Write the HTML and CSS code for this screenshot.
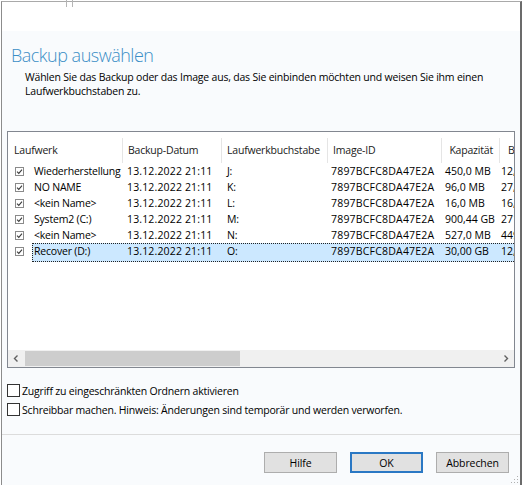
FILE: index.html
```html
<!DOCTYPE html>
<html lang="de">
<head>
<meta charset="utf-8">
<title>Backup auswählen</title>
<link rel="stylesheet" href="styles.css">
</head>
<body>
<div class="dialog">
  <div class="behind"></div>
  <div class="head">
    <h1 class="title">Backup auswählen</h1>
    <p class="subtitle">Wählen Sie das Backup oder das Image aus, das Sie einbinden möchten und weisen Sie ihm einen<br>Laufwerkbuchstaben zu.</p>
  </div>

  <div class="list">
    <div class="list-head">
      <div class="th c1">Laufwerk</div>
      <div class="th c2">Backup-Datum</div>
      <div class="th c3">Laufwerkbuchstabe</div>
      <div class="th c4">Image-ID</div>
      <div class="th c5">Kapazität</div>
      <div class="th c6">Belegt</div>
    </div>
    <div class="list-body">
      <div class="row">
        <div class="td c1"><svg class="chk" viewBox="0 0 9 9"><rect x="0.5" y="0.5" width="8" height="8"/><path d="M2 4.6 L3.8 6.4 L7 2.6"/></svg><span class="name">Wiederherstellung</span></div>
        <div class="td c2">13.12.2022 21:11</div>
        <div class="td c3">J:</div>
        <div class="td c4">7897BCFC8DA47E2A</div>
        <div class="td c5">450,0 MB</div>
        <div class="td c6">12,4 MB</div>
      </div>
      <div class="row">
        <div class="td c1"><svg class="chk" viewBox="0 0 9 9"><rect x="0.5" y="0.5" width="8" height="8"/><path d="M2 4.6 L3.8 6.4 L7 2.6"/></svg><span class="name">NO NAME</span></div>
        <div class="td c2">13.12.2022 21:11</div>
        <div class="td c3">K:</div>
        <div class="td c4">7897BCFC8DA47E2A</div>
        <div class="td c5">96,0 MB</div>
        <div class="td c6">27,9 MB</div>
      </div>
      <div class="row">
        <div class="td c1"><svg class="chk" viewBox="0 0 9 9"><rect x="0.5" y="0.5" width="8" height="8"/><path d="M2 4.6 L3.8 6.4 L7 2.6"/></svg><span class="name">&lt;kein Name&gt;</span></div>
        <div class="td c2">13.12.2022 21:11</div>
        <div class="td c3">L:</div>
        <div class="td c4">7897BCFC8DA47E2A</div>
        <div class="td c5">16,0 MB</div>
        <div class="td c6">16,0 MB</div>
      </div>
      <div class="row">
        <div class="td c1"><svg class="chk" viewBox="0 0 9 9"><rect x="0.5" y="0.5" width="8" height="8"/><path d="M2 4.6 L3.8 6.4 L7 2.6"/></svg><span class="name">System2 (C:)</span></div>
        <div class="td c2">13.12.2022 21:11</div>
        <div class="td c3">M:</div>
        <div class="td c4">7897BCFC8DA47E2A</div>
        <div class="td c5">900,44 GB</div>
        <div class="td c6">271,6 GB</div>
      </div>
      <div class="row">
        <div class="td c1"><svg class="chk" viewBox="0 0 9 9"><rect x="0.5" y="0.5" width="8" height="8"/><path d="M2 4.6 L3.8 6.4 L7 2.6"/></svg><span class="name">&lt;kein Name&gt;</span></div>
        <div class="td c2">13.12.2022 21:11</div>
        <div class="td c3">N:</div>
        <div class="td c4">7897BCFC8DA47E2A</div>
        <div class="td c5">527,0 MB</div>
        <div class="td c6">449,0 MB</div>
      </div>
      <div class="row selected">
        <div class="td c1"><svg class="chk" viewBox="0 0 9 9"><rect x="0.5" y="0.5" width="8" height="8"/><path d="M2 4.6 L3.8 6.4 L7 2.6"/></svg><span class="name">Recover (D:)</span></div>
        <div class="td c2">13.12.2022 21:11</div>
        <div class="td c3">O:</div>
        <div class="td c4">7897BCFC8DA47E2A</div>
        <div class="td c5">30,00 GB</div>
        <div class="td c6">12,85 GB</div>
      </div>
    </div>
    <div class="hscroll">
      <div class="arrow"><svg viewBox="0 0 17 17"><path d="M9.5 5.5 L6.5 8.5 L9.5 11.5"/></svg></div>
      <div class="thumb"></div>
      <div class="track"></div>
      <div class="arrow"><svg viewBox="0 0 17 17"><path d="M7.5 5.5 L10.5 8.5 L7.5 11.5"/></svg></div>
    </div>
  </div>

  <div class="options">
    <label class="opt"><span class="box"></span>Zugriff zu eingeschränkten Ordnern aktivieren</label>
    <label class="opt"><span class="box"></span>Schreibbar machen. Hinweis: Änderungen sind temporär und werden verworfen.</label>
  </div>

  <div class="footer">
    <button class="btn">Hilfe</button>
    <button class="btn default">OK</button>
    <button class="btn">Abbrechen</button>
  </div>

  <svg class="grip" viewBox="0 0 8 8"><rect x="6" y="0" width="1" height="1"/><rect x="3" y="3" width="1" height="1"/><rect x="6" y="3" width="1" height="1"/><rect x="0" y="6" width="1" height="1"/><rect x="3" y="6" width="1" height="1"/><rect x="6" y="6" width="1" height="1"/></svg>
</div>
</body>
</html>
```

FILE: styles.css
```css
* { box-sizing: border-box; }

html, body {
  margin: 0;
  padding: 0;
}

body {
  width: 525px;
  height: 485px;
  overflow: hidden;
  background: #ffffff;
  font-family: "Open Sans", "Noto Sans", sans-serif;
  font-size: 10.5px;
  letter-spacing: -0.2px;
  color: #000;
}

.dialog {
  position: relative;
  margin: 1px 0 0 1px;
  width: 521px;
  height: 484px;
  border-top: 1px solid #a9a9a9;
  border-left: 1px solid #8c8c8c;
  border-right: 2px solid #6b6b6b;
  background: linear-gradient(#ffffff 0, #ffffff 29px, #f9fbfd 29px);
  display: flex;
  flex-direction: column;
}

.behind {
  position: absolute;
  left: 64px;
  top: -2px;
  width: 7px;
  height: 7px;
  border-left: 1px solid #b5b5b5;
  border-right: 1px solid #b5b5b5;
}

.head {
  padding: 41px 0 0 9px;
}

.title {
  margin: 0;
  font-size: 18px;
  font-weight: 300;
  letter-spacing: -0.5px;
  line-height: 24px;
  color: #3b8ec6;
}

.subtitle {
  margin: 3px 0 0 14px;
  line-height: 14px;
  white-space: nowrap;
}

.list {
  margin: 33px 0 0 5px;
  width: 508px;
  height: 237px;
  border: 1px solid #828790;
  background: #fff;
  display: flex;
  flex-direction: column;
  overflow: hidden;
}

.list-head,
.row {
  display: grid;
  grid-template-columns: 115px 99px 106px 114px 58px 60px;
  width: 552px;
}

.list-head {
  height: 31px;
  align-items: end;
  flex: none;
}

.th {
  height: 25px;
  line-height: 25px;
  border-right: 1px solid #e5e5e5;
  white-space: nowrap;
  overflow: hidden;
  color: #1a1a1a;
}

.th.c1 { padding-left: 6px; }
.th.c2 { padding-left: 5px; }
.th.c3 { padding-left: 5px; }
.th.c4 { padding-left: 5px; }
.th.c5 { text-align: right; padding-right: 6px; }
.th.c6 { padding-left: 8px; }

.list-body {
  flex: 1;
}

.row {
  position: relative;
  height: 16px;
  line-height: 16px;
}

.row.selected::before {
  content: "";
  position: absolute;
  left: 24px;
  top: 0;
  width: 482px;
  height: 17px;
  background: #cce8ff;
  border: 1px dotted #222;
}

.td {
  position: relative;
  white-space: nowrap;
  overflow: hidden;
}

.td.c1 {
  display: flex;
  align-items: center;
  padding-left: 7px;
}
.td.c2 { padding-left: 4px; letter-spacing: 0.15px; }
.td.c3 { padding-left: 5px; }
.td.c4 { padding-left: 3px; letter-spacing: 0.2px; }
.td.c5 { padding-left: 3px; letter-spacing: 0; }
.td.c6 { padding-left: 1px; letter-spacing: 0; }

.chk {
  flex: none;
  width: 9px;
  height: 9px;
}
.chk rect {
  fill: #fff;
  stroke: #8a8a8a;
  stroke-width: 1;
}
.chk path {
  fill: none;
  stroke: #3c3c3c;
  stroke-width: 1.1;
}

.name {
  margin-left: 10px;
}

.hscroll {
  flex: none;
  height: 17px;
  background: #f0f0f0;
  display: flex;
  align-items: center;
}

.arrow {
  width: 17px;
  height: 17px;
  flex: none;
}
.arrow svg {
  display: block;
  width: 17px;
  height: 17px;
}
.arrow path {
  fill: none;
  stroke: #606060;
  stroke-width: 1.4;
}

.thumb {
  width: 215px;
  height: 15px;
  background: #cdcdcd;
  flex: none;
}

.track {
  flex: 1;
}

.options {
  margin: 13px 0 0 5px;
  display: flex;
  flex-direction: column;
}

.opt {
  height: 19px;
  display: flex;
  align-items: center;
  white-space: nowrap;
}

.box {
  width: 13px;
  height: 13px;
  border: 1px solid #333;
  background: #fff;
  margin-right: 2px;
  flex: none;
}

.footer {
  margin-top: 15px;
  border-top: 1px solid #dcdcdc;
  padding: 17px 11px 0 0;
  display: flex;
  justify-content: flex-end;
  gap: 13px;
}

.btn {
  width: 73px;
  height: 21px;
  padding: 0;
  border: 1px solid #adadad;
  background: #e1e1e1;
  font-family: "Open Sans", "Noto Sans", sans-serif;
  font-size: 10.5px;
  letter-spacing: -0.1px;
  color: #000;
}

.btn.default {
  border: 2px solid #2a78c4;
}

.grip {
  position: absolute;
  right: 1px;
  bottom: 1px;
  width: 8px;
  height: 8px;
}
.grip rect {
  fill: #b0b0b0;
}
```
